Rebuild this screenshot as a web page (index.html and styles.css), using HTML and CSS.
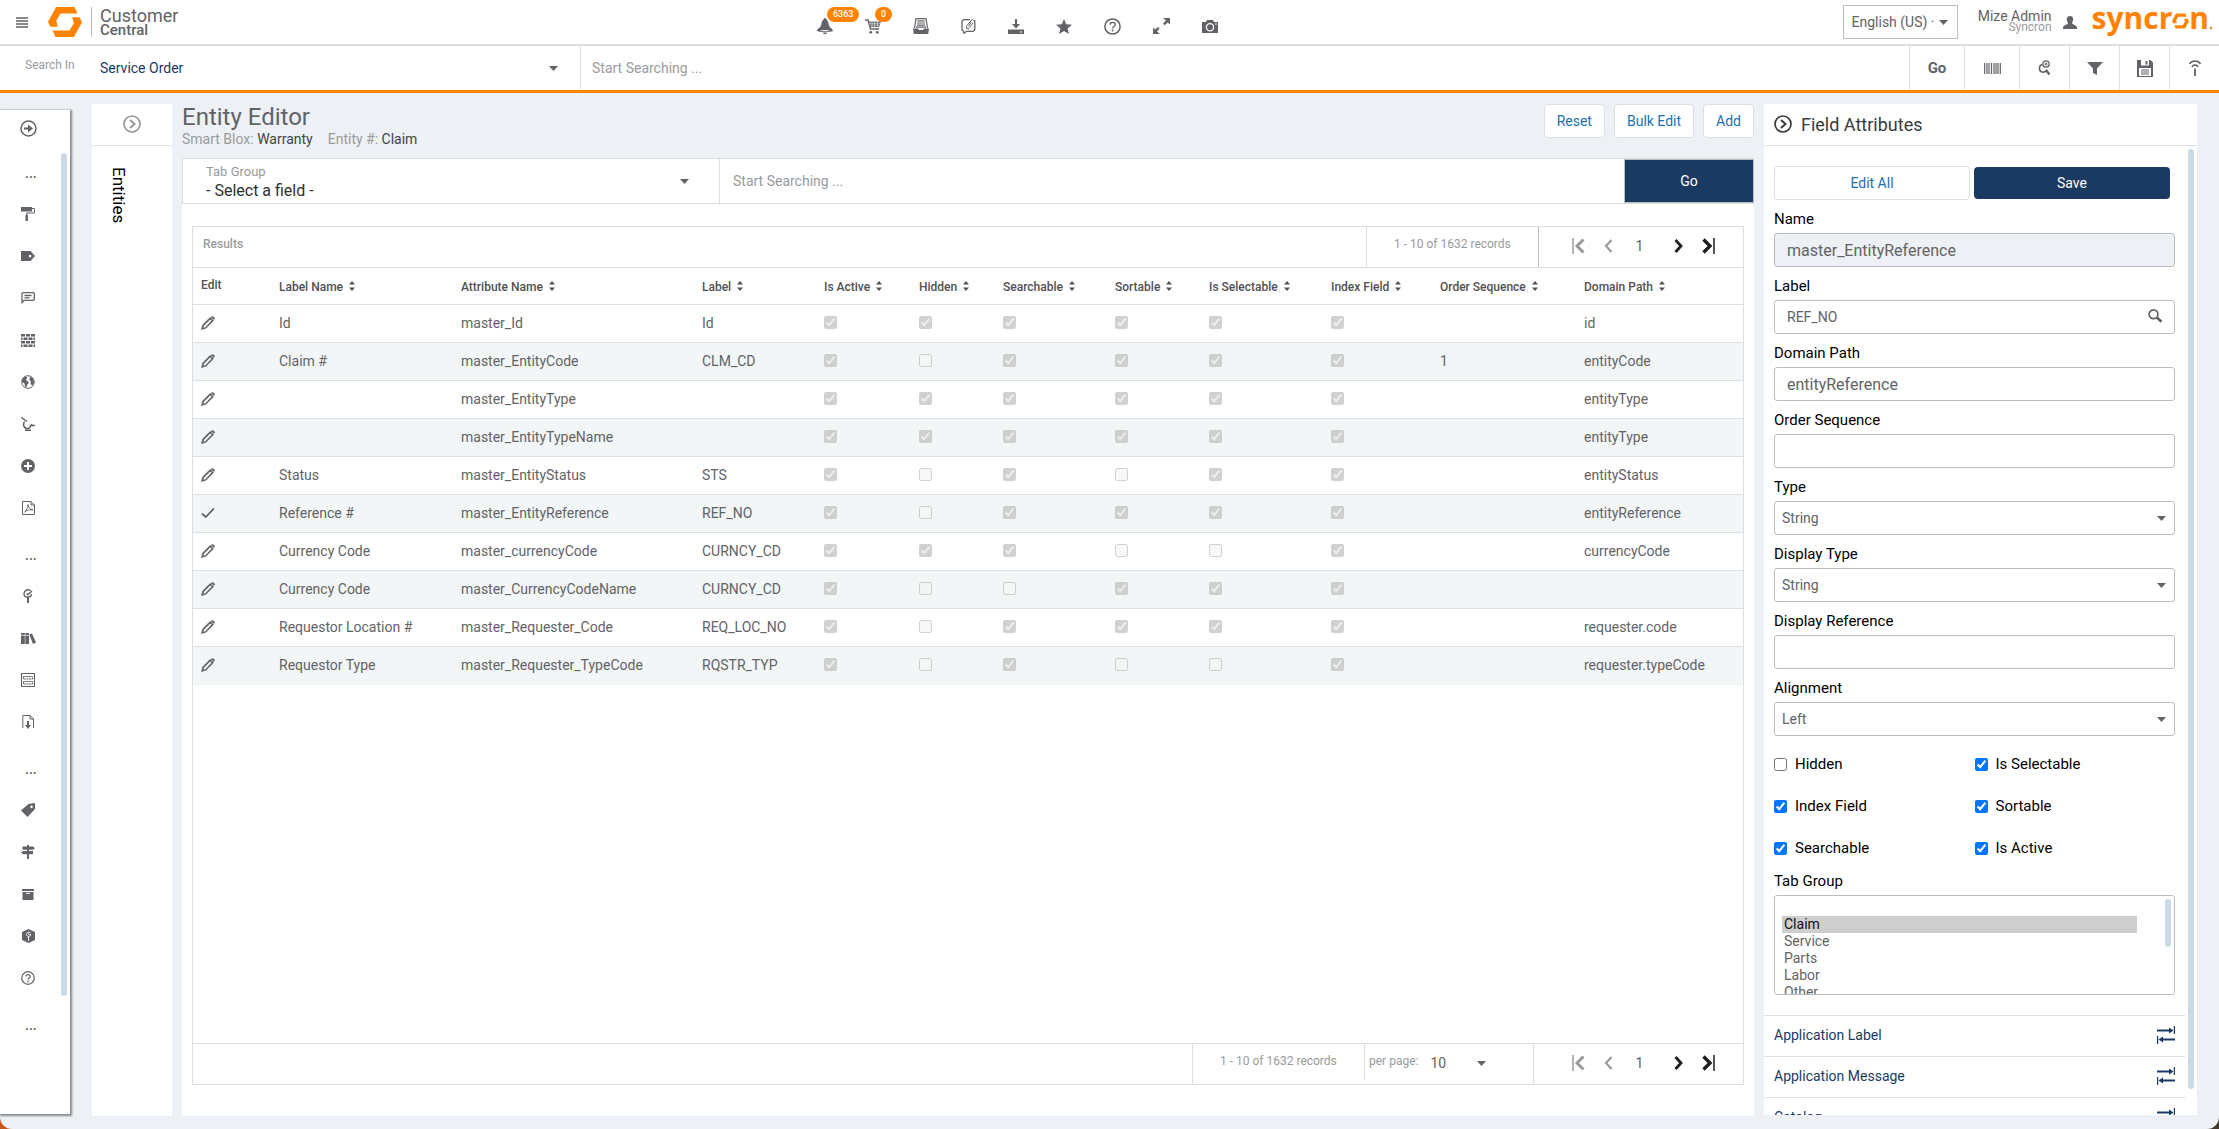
FILE: index.html
```html
<!DOCTYPE html>
<html lang="en">
<head>
<meta charset="utf-8">
<title>Customer Central - Entity Editor</title>
<link rel="stylesheet" href="styles.css">
</head>
<body>
<svg class="sprite" aria-hidden="true">
  <symbol id="i-pencil" viewBox="0 0 14 14"><path d="M0 14l1.300-5L9.200 1.100 12.800 4.700 5 12.600z M2.900 9.800l-.5 1.900 1.900-.4L10.500 4.800 9.200 3.500z" fill-rule="evenodd"/><path d="M9.800 .9c.9-1 2.200-1 3.100-.1 1 .9 1.100 2.100.2 3.200z"/></symbol>
  <symbol id="i-sort" viewBox="0 0 6 10"><path d="M0 3.600L3 0l3 3.600zM0 6.400L3 10l3-3.600z"/></symbol>
  <symbol id="i-first" viewBox="0 0 13 16"><path d="M1 0v16" fill="none" stroke="currentColor" stroke-width="1.500"/><path d="M11.500 1.500L5 8l6.500 6.500" fill="none" stroke="currentColor" stroke-width="3"/></symbol>
  <symbol id="i-prev" viewBox="0 0 9 14"><path d="M7.500 1L2 7l5.500 6" fill="none" stroke="currentColor" stroke-width="2.200"/></symbol>
  <symbol id="i-next" viewBox="0 0 9 14"><path d="M1.500 1L7 7l-5.500 6" fill="none" stroke="currentColor" stroke-width="2.800"/></symbol>
  <symbol id="i-last" viewBox="0 0 13 16"><path d="M12 0v16" fill="none" stroke="currentColor" stroke-width="1.500"/><path d="M1.500 1.500L8 8l-6.500 6.500" fill="none" stroke="currentColor" stroke-width="3.400"/></symbol>
  <symbol id="i-swap" viewBox="0 0 18 18"><path d="M17.400 0v8M.6 10v8" fill="none" stroke="currentColor" stroke-width="1.200"/><path d="M0 4.500h13M5 13.500h13" fill="none" stroke="currentColor" stroke-width="2"/><path d="M12 1.500l4.500 3-4.500 3zM6 10.500l-4.500 3 4.500 3z"/></symbol>
  <symbol id="i-chev" viewBox="0 0 18 18"><circle cx="9" cy="9" r="8" fill="none" stroke="currentColor" stroke-width="1.700"/><path d="M7 5l4.500 4L7 13" fill="none" stroke="currentColor" stroke-width="2"/></symbol>
  <symbol id="i-help" viewBox="0 0 17 17"><circle cx="8.500" cy="8.500" r="7.600" fill="none" stroke="currentColor" stroke-width="1.500"/><path d="M6 6.800c0-3.300 5.200-3.100 5.200-.2 0 1.700-2.500 1.700-2.500 3.800" fill="none" stroke="currentColor" stroke-width="1.400"/><circle cx="8.600" cy="12.600" r="1"/></symbol>
</svg>

<header class="topbar">
  <button class="plain menu-btn" aria-label="Menu"><svg width="12" height="11" viewBox="0 0 12 11"><path d="M0 1h12M0 4h12M0 7h12M0 10h12" stroke="currentColor" stroke-width="1.500"/></svg></button>
  <a class="brand" href="#">
    <svg width="34" height="30" viewBox="0 0 34 30" aria-hidden="true"><path fill="#ff8200" d="M8.200 0H26.600L29.400 6.500H12.500L8.200 13.700 9.800 19.700H2.500L0 14.700zM25.800 30H7.400L4.600 23.500H21.500L25.800 16.300 24.200 10.300H31.500L34 15.300z"/></svg>
    <span class="brand-text"><span class="brand-1">Customer</span><span class="brand-2">Central</span></span>
  </a>
  <nav class="quick" aria-label="Quick actions">
    <a href="#" aria-label="Notifications"><svg width="16" height="16" viewBox="0 0 16 16"><path d="M8 0c1 0 1.200 1 1.500 1.500C11.500 3 11.300 5 12 7.500c.7 2.500 3.700 3 4 5.500-3 1.400-13 1.400-16 0 .3-2.500 3.300-3 4-5.500C4.700 5 4.500 3 6.500 1.500 6.800 1 7 0 8 0z"/><path d="M6 14.500h4L9.500 16h-3z"/><ellipse cx="8" cy="12.600" rx="4.500" ry=".7" fill="#fff"/></svg><span class="badge">6363</span></a>
    <a href="#" aria-label="Cart"><svg width="16" height="15" viewBox="0 0 16 15"><path d="M0 1h3l2.500 9H14" fill="none" stroke="currentColor" stroke-width="1.400"/><path d="M4 2.500h12L14.200 8H5.400z"/><path d="M4 4.300h12M4.500 6.200h11M7 2v7M9.700 2v7M12.500 2v7" stroke="#fff" stroke-width=".5"/><circle cx="5.700" cy="13.300" r="1.400"/><circle cx="12.300" cy="13.300" r="1.400"/></svg><span class="badge">0</span></a>
    <a href="#" aria-label="Archive"><svg width="16" height="16" viewBox="0 0 16 16"><path d="M1.500 10L3 .6h10L14.500 10M4.500 2.800h7M4 5h8M4 7.200h8M3 9.200h10" fill="none" stroke="currentColor" stroke-width="1.200"/><path d="M0 10.500h5l1 1.500h4l1-1.500h5l-.8 5.500H.8z"/></svg></a>
    <a href="#" aria-label="Notes"><svg width="15" height="16" viewBox="0 0 15 16"><path d="M9 1.700H2.500L1 3v9l1.500 1.300.5 2 2.500-2H12L13.800 12V3L12.500 2" fill="none" stroke="currentColor" stroke-width="1.300"/><path d="M11.500 1L6 7.500c-1.500 2 .5 4 2.300 2.200L12 5M10.300 4L7.500 8.200M5 9.500l2.500 2" fill="none" stroke="currentColor"/></svg></a>
    <a href="#" aria-label="Download"><svg width="16" height="15" viewBox="0 0 16 15"><path d="M7 0h2v5h3L8 9.500 4 5h3z"/><path d="M0 10.500h16V15H0z"/><path d="M12 13h2" stroke="#fff"/></svg></a>
    <a href="#" aria-label="Favourites"><svg width="16" height="15" viewBox="0 0 16 15"><path d="M8 0l2.200 5.200 5.800.5-4.400 3.700L13 15l-5-3-5 3 1.400-5.600L0 5.700l5.800-.5z"/></svg></a>
    <a href="#" aria-label="Help"><svg width="17" height="17"><use href="#i-help"/></svg></a>
    <a href="#" aria-label="Full screen"><svg width="17" height="16" viewBox="0 0 17 16"><path d="M10 0h7v6.500l-2.200-2.100-3.200 2.800-1.600-1.600 3-3zM7 16H0V9.500l2.200 2.100L5 9l1.600 1.500L4 13.500z"/></svg></a>
    <a href="#" aria-label="Screenshot"><svg width="16" height="13" viewBox="0 0 16 13"><path d="M0 2h4l1-2h6l1 2h4v11H0z"/><circle cx="8" cy="7.300" r="3.600" fill="none" stroke="#fff" stroke-width="1.300"/><path d="M13 4h2" stroke="#fff"/></svg></a>
  </nav>
  <div class="account">
    <select class="lang" aria-label="Language"><option>English (US) ·</option></select>
    <div class="user"><span class="user-name">Mize Admin</span><span class="user-org">Syncron</span></div>
    <svg class="user-icon" width="14" height="13" viewBox="0 0 14 13" aria-hidden="true"><path d="M7 0c4 0 3.600 4.500 2 7 .3 2 5 1.500 5 5v1H0v-1c0-3.500 4.700-3 5-5C3.400 4.500 3 0 7 0z"/></svg>
    <a class="wordmark" href="#" aria-label="syncron"><span>syncr</span><svg width="17" height="16" viewBox="0 0 34 30" aria-hidden="true"><path fill="#ff8200" d="M8.200 0H26.600L29.400 6.500H12.500L8.200 13.700 9.800 19.700H2.500L0 14.700zM25.800 30H7.400L4.600 23.500H21.500L25.800 16.300 24.200 10.300H31.500L34 15.300z"/></svg><span>n</span><span class="dot">.</span></a>
  </div>
</header>

<form class="searchbar">
  <label class="search-in" for="scope">Search In</label>
  <select class="scope" id="scope"><option>Service Order</option></select>
  <input class="query" type="text" placeholder="Start Searching ..." aria-label="Start Searching">
  <button class="tool tool-wide tool-go" type="button">Go</button>
  <button class="tool tool-wide" type="button" aria-label="Barcode"><svg width="17" height="11" viewBox="0 0 17 11"><path d="M.7 0v11M3 0v11M5 0v11M7.500 0v11M10 0v11M12 0v11M14 0v11M16.300 0v11" stroke="currentColor" stroke-width="1.200"/></svg></button>
  <button class="tool" type="button" aria-label="Advanced search"><svg width="13" height="16" viewBox="0 0 13 16"><circle cx="8" cy="4" r="3.200" fill="none" stroke="currentColor" stroke-width="1.300"/><path d="M8 2.300v3.400M6.300 4h3.400" stroke="currentColor" stroke-width="1"/><path d="M4 4.500C.5 6 .5 11 4 12c2.500.5 4-.5 5-2" fill="none" stroke="currentColor" stroke-width="1.500"/><path d="M8 10l3.500 4.500" stroke="currentColor" stroke-width="2.200"/></svg></button>
  <button class="tool" type="button" aria-label="Filter"><svg width="16" height="13" viewBox="0 0 16 13"><path d="M0 0h16L10 6.500V13L6 11V6.500z"/></svg></button>
  <button class="tool" type="button" aria-label="Save"><svg width="16" height="17" viewBox="0 0 16 17"><path d="M0 0h13.500L16 2.500V17H0z"/><path d="M4 0h8v5.500H4z" fill="#fff"/><path d="M8.500 1h2v3.500h-2z"/><path d="M2 8h12v8H2z" fill="#fff"/><path d="M4 10h8M4 12h8M4 14h8" stroke="currentColor" stroke-width="1.100"/></svg></button>
  <button class="tool" type="button" aria-label="Signal"><svg width="12" height="16" viewBox="0 0 12 16"><path d="M.5 4C2.500 0 9.500 0 11.500 4M3 7C4 4.500 8 4.500 9 7" fill="none" stroke="currentColor" stroke-width="1.600"/><path d="M6 8.500V16" stroke="currentColor" stroke-width="1.800"/></svg></button>
</form>

<div class="work">
  <nav class="rail" aria-label="Modules">
    <a class="rail-top" href="#" aria-label="Expand"><svg width="17" height="17" viewBox="0 0 17 17"><circle cx="8.500" cy="8.500" r="7.500" fill="none" stroke="currentColor" stroke-width="1.500"/><path d="M4 7.500h4V4.500l5 4-5 4v-3H4z"/></svg></a>
    <div class="rail-sep">...</div>
    <a href="#" aria-label="Theme"><svg width="14" height="14" viewBox="0 0 14 14"><path d="M0 0h11v4.500H0z"/><path d="M11 1.500h2.400v4.500H5.700v2.500" fill="none" stroke="currentColor"/><path d="M4.500 8h2.400v6H4.500z"/></svg></a>
    <a href="#" aria-label="Labels"><svg width="14" height="10" viewBox="0 0 14 10"><path fill-rule="evenodd" d="M0 0h9.500L14 5l-4.500 5H0zM9 3.800a1.300 1.300 0 1 0 .1 0z"/></svg></a>
    <a href="#" aria-label="Messages"><svg width="14" height="12" viewBox="0 0 14 12"><path d="M1 11.500V1.500L2 .7h10.500l.8.800v6l-.8.800H3L.7 11M3.500 3.500h7M3.500 5.800h5" fill="none" stroke="currentColor" stroke-width="1.300"/></svg></a>
    <a href="#" aria-label="Blocks"><svg width="14" height="13" viewBox="0 0 14 13"><path d="M0 1.200h14M0 8.200h14" stroke="currentColor" stroke-width="2.400" stroke-dasharray="4 1"/><path d="M0 4.700h14M0 11.700h14" stroke="currentColor" stroke-width="2.400" stroke-dasharray="4 1" stroke-dashoffset="2.500"/></svg></a>
    <a href="#" aria-label="Global"><svg width="14" height="14" viewBox="0 0 14 14"><circle cx="7" cy="7" r="6.300" fill="none" stroke="currentColor" stroke-width="1"/><path d="M1 4.500L4 1.500l2.500 1L5 4.500l1 1.500 2 1.500L6 10l-.5 3L4 11 3.500 8.500 1 7zM9 1.500l3 2 1 4-1.500 3L9.500 9 10 6.500 8.500 5z"/></svg></a>
    <a href="#" aria-label="Tools"><svg width="14" height="14" viewBox="0 0 14 14"><path d="M.5.500L6 4.500M3.500 4.500C1.500 8 3 11 6 11.500c2.500.3 3.500-1.500 3.500-3H14M4 13.300h6M9.500 8.500l2-1" fill="none" stroke="currentColor" stroke-width="1.500"/></svg></a>
    <a href="#" aria-label="Add"><svg width="14" height="14" viewBox="0 0 14 14"><circle cx="7" cy="7" r="7"/><path d="M7 3v8M3 7h8" stroke="#fff" stroke-width="2"/></svg></a>
    <a href="#" aria-label="PDF"><svg width="13" height="14" viewBox="0 0 13 14"><path d="M.5.500h8.500l3.500 3.500v9.500H.5zM9 .5V4h3.500" fill="none" stroke="currentColor"/><path d="M2.500 11.500C4.500 9 6 6.500 6 3.500c.5 3 2 5 5 5.500-3-.5-5.500 0-8 1.500" fill="none" stroke="currentColor" stroke-width=".9"/></svg></a>
    <div class="rail-sep">...</div>
    <a href="#" aria-label="Diagnostics"><svg width="10" height="14" viewBox="0 0 10 14"><path d="M7.500 1.500C4-.5 1 2 1 5c0 4 7.500 4 7.500 0M3.500 4.500l1.500 1 4-3.500" fill="none" stroke="currentColor" stroke-width="1.400"/><path d="M5 8v6" stroke="currentColor" stroke-width="2"/></svg></a>
    <a href="#" aria-label="Library"><svg width="15" height="11" viewBox="0 0 15 11"><path d="M0 0h3.800v11H0zM4.300 0H8v11H4.300zM8.300 1.500L11 .5 15 9.500 12 11z"/><path d="M0 2.300h8" stroke="#fff" stroke-width=".7"/></svg></a>
    <a href="#" aria-label="Forms"><svg width="14" height="14" viewBox="0 0 14 14"><path d="M.5.500h13v13H.5z" fill="none" stroke="currentColor" stroke-width="1.200"/><path d="M2.500 3.500h9v2.500h-9zM2.500 8.500h9v2.500h-9z" fill="none" stroke="currentColor" stroke-width="1" stroke-dasharray="2 .6"/></svg></a>
    <a href="#" aria-label="Import"><svg width="12" height="14" viewBox="0 0 12 14"><path d="M.8 13V.5H8L11.500 4v9M8 .5V4h3.500" fill="none" stroke="currentColor"/><path d="M5 6h2v4h2l-3 4-3-4h2z"/></svg></a>
    <div class="rail-sep">...</div>
    <a href="#" aria-label="Pricing"><svg width="14" height="14" viewBox="0 0 14 14"><path fill-rule="evenodd" d="M7.500 1L14 0v6L6.500 14 0 7.500zM10.500 2.600a1.300 1.300 0 1 0 .1 0z"/></svg></a>
    <a href="#" aria-label="Routes"><svg width="14" height="14" viewBox="0 0 14 14"><path d="M6 0h2v14H6z"/><path d="M1.500 1.500H12l2 1.700-2 1.600H1.500zM12 6H2L0 7.600l2 1.700h10z"/></svg></a>
    <a href="#" aria-label="Storage"><svg width="12" height="11" viewBox="0 0 12 11"><path d="M0 0h12v2H0zM.5 3h11v8H.5z"/><path d="M4 4.300h4" stroke="#fff"/></svg></a>
    <a href="#" aria-label="Services"><svg width="13" height="14" viewBox="0 0 13 14"><path d="M6.500 0L13 3v8l-6.500 3L0 11V3z"/><path d="M8.500 3.800C6 2.300 4.300 4 4.500 5.500c.3 2.500 4 2.500 4.300 0L6 5M6.500 7.500V12" fill="none" stroke="#fff" stroke-width="1"/></svg></a>
    <a href="#" aria-label="Help"><svg width="14" height="14"><use href="#i-help"/></svg></a>
    <div class="rail-sep">...</div>
    <div class="rail-thumb"></div>
  </nav>

  <aside class="entities">
    <div class="entities-head"><button class="plain" aria-label="Expand entities"><svg width="18" height="18"><use href="#i-chev"/></svg></button></div>
    <h2>Entities</h2>
  </aside>

  <main class="editor">
    <div class="editor-head">
      <div>
        <h1>Entity Editor</h1>
        <p class="meta"><span>Smart Blox: <b>Warranty</b></span><span>Entity #: <b>Claim</b></span></p>
      </div>
      <div class="actions">
        <button class="btn">Reset</button>
        <button class="btn">Bulk Edit</button>
        <button class="btn">Add</button>
      </div>
    </div>

    <form class="filter">
      <div class="filter-group">
        <label for="tabgroup">Tab Group</label>
        <select id="tabgroup"><option>- Select a field -</option></select>
      </div>
      <input type="text" placeholder="Start Searching ..." aria-label="Search fields">
      <button class="filter-go" type="button">Go</button>
    </form>

    <div class="content">
      <section class="results">
        <div class="bar">
          <h3>Results</h3>
          <span class="records records-top">1 - 10 of 1632 records</span>
          <div class="pager">
            <button class="plain off" aria-label="First page"><svg width="13" height="16"><use href="#i-first"/></svg></button>
            <button class="plain off" aria-label="Previous page"><svg width="9" height="14"><use href="#i-prev"/></svg></button>
            <span class="page">1</span>
            <button class="plain" aria-label="Next page"><svg width="9" height="14"><use href="#i-next"/></svg></button>
            <button class="plain" aria-label="Last page"><svg width="13" height="16"><use href="#i-last"/></svg></button>
          </div>
        </div>
        <table>
          <colgroup><col class="c-edit"><col class="c-name"><col class="c-attr"><col class="c-label"><col class="c-active"><col class="c-hidden"><col class="c-search"><col class="c-sort"><col class="c-select"><col class="c-index"><col class="c-order"><col></colgroup>
          <thead>
            <tr><th class="th-edit">Edit</th><th>Label Name<svg><use href="#i-sort"/></svg></th><th>Attribute Name<svg><use href="#i-sort"/></svg></th><th>Label<svg><use href="#i-sort"/></svg></th><th>Is Active<svg><use href="#i-sort"/></svg></th><th>Hidden<svg><use href="#i-sort"/></svg></th><th>Searchable<svg><use href="#i-sort"/></svg></th><th>Sortable<svg><use href="#i-sort"/></svg></th><th>Is Selectable<svg><use href="#i-sort"/></svg></th><th>Index Field<svg><use href="#i-sort"/></svg></th><th>Order Sequence<svg><use href="#i-sort"/></svg></th><th>Domain Path<svg><use href="#i-sort"/></svg></th></tr>
          </thead>
          <tbody>
            <tr><td><button class="plain" aria-label="Edit"><svg width="14" height="14"><use href="#i-pencil"/></svg></button></td><td>Id</td><td>master_Id</td><td>Id</td><td><input type="checkbox" aria-label="Is Active" disabled checked></td><td><input type="checkbox" aria-label="Hidden" disabled checked></td><td><input type="checkbox" aria-label="Searchable" disabled checked></td><td><input type="checkbox" aria-label="Sortable" disabled checked></td><td><input type="checkbox" aria-label="Is Selectable" disabled checked></td><td><input type="checkbox" aria-label="Index Field" disabled checked></td><td></td><td>id</td></tr>
            <tr><td><button class="plain" aria-label="Edit"><svg width="14" height="14"><use href="#i-pencil"/></svg></button></td><td>Claim #</td><td>master_EntityCode</td><td>CLM_CD</td><td><input type="checkbox" aria-label="Is Active" disabled checked></td><td><input type="checkbox" aria-label="Hidden" disabled></td><td><input type="checkbox" aria-label="Searchable" disabled checked></td><td><input type="checkbox" aria-label="Sortable" disabled checked></td><td><input type="checkbox" aria-label="Is Selectable" disabled checked></td><td><input type="checkbox" aria-label="Index Field" disabled checked></td><td>1</td><td>entityCode</td></tr>
            <tr><td><button class="plain" aria-label="Edit"><svg width="14" height="14"><use href="#i-pencil"/></svg></button></td><td></td><td>master_EntityType</td><td></td><td><input type="checkbox" aria-label="Is Active" disabled checked></td><td><input type="checkbox" aria-label="Hidden" disabled checked></td><td><input type="checkbox" aria-label="Searchable" disabled checked></td><td><input type="checkbox" aria-label="Sortable" disabled checked></td><td><input type="checkbox" aria-label="Is Selectable" disabled checked></td><td><input type="checkbox" aria-label="Index Field" disabled checked></td><td></td><td>entityType</td></tr>
            <tr><td><button class="plain" aria-label="Edit"><svg width="14" height="14"><use href="#i-pencil"/></svg></button></td><td></td><td>master_EntityTypeName</td><td></td><td><input type="checkbox" aria-label="Is Active" disabled checked></td><td><input type="checkbox" aria-label="Hidden" disabled checked></td><td><input type="checkbox" aria-label="Searchable" disabled checked></td><td><input type="checkbox" aria-label="Sortable" disabled checked></td><td><input type="checkbox" aria-label="Is Selectable" disabled checked></td><td><input type="checkbox" aria-label="Index Field" disabled checked></td><td></td><td>entityType</td></tr>
            <tr><td><button class="plain" aria-label="Edit"><svg width="14" height="14"><use href="#i-pencil"/></svg></button></td><td>Status</td><td>master_EntityStatus</td><td>STS</td><td><input type="checkbox" aria-label="Is Active" disabled checked></td><td><input type="checkbox" aria-label="Hidden" disabled></td><td><input type="checkbox" aria-label="Searchable" disabled checked></td><td><input type="checkbox" aria-label="Sortable" disabled></td><td><input type="checkbox" aria-label="Is Selectable" disabled checked></td><td><input type="checkbox" aria-label="Index Field" disabled checked></td><td></td><td>entityStatus</td></tr>
            <tr><td><button class="plain" aria-label="Selected"><svg width="14" height="14" viewBox="0 0 14 14"><path d="M1 7.500L4.800 11 13 2.500" fill="none" stroke="currentColor" stroke-width="1.800"/></svg></button></td><td>Reference #</td><td>master_EntityReference</td><td>REF_NO</td><td><input type="checkbox" aria-label="Is Active" disabled checked></td><td><input type="checkbox" aria-label="Hidden" disabled></td><td><input type="checkbox" aria-label="Searchable" disabled checked></td><td><input type="checkbox" aria-label="Sortable" disabled checked></td><td><input type="checkbox" aria-label="Is Selectable" disabled checked></td><td><input type="checkbox" aria-label="Index Field" disabled checked></td><td></td><td>entityReference</td></tr>
            <tr><td><button class="plain" aria-label="Edit"><svg width="14" height="14"><use href="#i-pencil"/></svg></button></td><td>Currency Code</td><td>master_currencyCode</td><td>CURNCY_CD</td><td><input type="checkbox" aria-label="Is Active" disabled checked></td><td><input type="checkbox" aria-label="Hidden" disabled checked></td><td><input type="checkbox" aria-label="Searchable" disabled checked></td><td><input type="checkbox" aria-label="Sortable" disabled></td><td><input type="checkbox" aria-label="Is Selectable" disabled></td><td><input type="checkbox" aria-label="Index Field" disabled checked></td><td></td><td>currencyCode</td></tr>
            <tr><td><button class="plain" aria-label="Edit"><svg width="14" height="14"><use href="#i-pencil"/></svg></button></td><td>Currency Code</td><td>master_CurrencyCodeName</td><td>CURNCY_CD</td><td><input type="checkbox" aria-label="Is Active" disabled checked></td><td><input type="checkbox" aria-label="Hidden" disabled></td><td><input type="checkbox" aria-label="Searchable" disabled></td><td><input type="checkbox" aria-label="Sortable" disabled checked></td><td><input type="checkbox" aria-label="Is Selectable" disabled checked></td><td><input type="checkbox" aria-label="Index Field" disabled checked></td><td></td><td></td></tr>
            <tr><td><button class="plain" aria-label="Edit"><svg width="14" height="14"><use href="#i-pencil"/></svg></button></td><td>Requestor Location #</td><td>master_Requester_Code</td><td>REQ_LOC_NO</td><td><input type="checkbox" aria-label="Is Active" disabled checked></td><td><input type="checkbox" aria-label="Hidden" disabled></td><td><input type="checkbox" aria-label="Searchable" disabled checked></td><td><input type="checkbox" aria-label="Sortable" disabled checked></td><td><input type="checkbox" aria-label="Is Selectable" disabled checked></td><td><input type="checkbox" aria-label="Index Field" disabled checked></td><td></td><td>requester.code</td></tr>
            <tr><td><button class="plain" aria-label="Edit"><svg width="14" height="14"><use href="#i-pencil"/></svg></button></td><td>Requestor Type</td><td>master_Requester_TypeCode</td><td>RQSTR_TYP</td><td><input type="checkbox" aria-label="Is Active" disabled checked></td><td><input type="checkbox" aria-label="Hidden" disabled></td><td><input type="checkbox" aria-label="Searchable" disabled checked></td><td><input type="checkbox" aria-label="Sortable" disabled></td><td><input type="checkbox" aria-label="Is Selectable" disabled></td><td><input type="checkbox" aria-label="Index Field" disabled checked></td><td></td><td>requester.typeCode</td></tr>
          </tbody>
        </table>
        <div class="bar bar-foot">
          <span class="records">1 - 10 of 1632 records</span>
          <div class="perpage"><label for="perpage">per page:</label><select id="perpage"><option>10</option></select></div>
          <div class="pager">
            <button class="plain off" aria-label="First page"><svg width="13" height="16"><use href="#i-first"/></svg></button>
            <button class="plain off" aria-label="Previous page"><svg width="9" height="14"><use href="#i-prev"/></svg></button>
            <span class="page">1</span>
            <button class="plain" aria-label="Next page"><svg width="9" height="14"><use href="#i-next"/></svg></button>
            <button class="plain" aria-label="Last page"><svg width="13" height="16"><use href="#i-last"/></svg></button>
          </div>
        </div>
      </section>
    </div>
  </main>

  <aside class="attrs">
    <div class="attrs-head"><button class="plain" aria-label="Collapse"><svg width="18" height="18"><use href="#i-chev"/></svg></button><h2>Field Attributes</h2></div>
    <form class="attrs-body">
      <div class="attrs-actions"><button class="btn" type="button">Edit All</button><button class="btn-primary" type="button">Save</button></div>
      <div class="field"><label for="f-name">Name</label><input id="f-name" type="text" value="master_EntityReference" readonly></div>
      <div class="field"><label for="f-label">Label</label><div class="with-icon"><input class="small" id="f-label" type="text" value="REF_NO"><svg width="15" height="14" viewBox="0 0 15 14" aria-hidden="true"><circle cx="5.500" cy="5.300" r="4.400" fill="none" stroke="currentColor" stroke-width="1.700"/><path d="M8.800 8.500l4.700 4.300" stroke="currentColor" stroke-width="2.600"/></svg></div></div>
      <div class="field"><label for="f-path">Domain Path</label><input id="f-path" type="text" value="entityReference"></div>
      <div class="field"><label for="f-order">Order Sequence</label><input id="f-order" type="text"></div>
      <div class="field"><label for="f-type">Type</label><select id="f-type"><option>String</option></select></div>
      <div class="field"><label for="f-dtype">Display Type</label><select id="f-dtype"><option>String</option></select></div>
      <div class="field"><label for="f-dref">Display Reference</label><input id="f-dref" type="text"></div>
      <div class="field"><label for="f-align">Alignment</label><select id="f-align"><option>Left</option></select></div>
      <div class="checks">
        <label><input type="checkbox">Hidden</label><label><input type="checkbox" checked>Is Selectable</label>
        <label><input type="checkbox" checked>Index Field</label><label><input type="checkbox" checked>Sortable</label>
        <label><input type="checkbox" checked>Searchable</label><label><input type="checkbox" checked>Is Active</label>
      </div>
      <div class="field"><label for="f-tabs">Tab Group</label><div class="listbox"><select id="f-tabs" multiple><option></option><option selected>Claim</option><option>Service</option><option>Parts</option><option>Labor</option><option>Other</option></select><div class="list-thumb"></div></div></div>
    </form>
    <div class="links">
      <a href="#">Application Label<svg width="18" height="18"><use href="#i-swap"/></svg></a>
      <a href="#">Application Message<svg width="18" height="18"><use href="#i-swap"/></svg></a>
      <a href="#">Catalog<svg width="18" height="18"><use href="#i-swap"/></svg></a>
    </div>
    <div class="attrs-thumb"></div>
  </aside>
</div>
</body>
</html>
```
FILE: styles.css
```css
* { box-sizing: border-box; }

:root {
  --grey: #626366;
  --light: #989b9e;
  --line: #dbdfe3;
  --field: #b9bec1;
  --navy: #1b3a61;
  --blue: #1b70ae;
  --orange: #ff8200;
  --thumb: #cbdae4;
}

html {
  height: 100%;
  background: linear-gradient(to right, #c5561b 50%, #45382c 50%);
}

body {
  margin: 0;
  height: 100vh;
  display: flex;
  flex-direction: column;
  overflow: hidden;
  background: #edf1f5;
  border-radius: 0 0 12px 12px;
  font-family: Roboto, "Liberation Sans", sans-serif;
  font-size: 14px;
  line-height: 20px;
  color: var(--grey);
}

h1, h2, h3, p { margin: 0; font-weight: 400; }
a { color: inherit; text-decoration: none; }
svg { fill: currentColor; flex: none; display: block; }
.sprite { position: absolute; width: 0; height: 0; }

input, select, button { font: inherit; color: inherit; margin: 0; }
input[type="checkbox"] { width: 13px; height: 13px; display: block; }
input::placeholder { color: var(--light); opacity: 1; }
button { cursor: pointer; }

select:not([multiple]) {
  appearance: none;
  border: 0;
  border-radius: 0;
  background: no-repeat url("data:image/svg+xml,%3Csvg xmlns='http://www.w3.org/2000/svg' width='9' height='5'%3E%3Cpath d='M0 0h9L4.500 5z' fill='%23626366'/%3E%3C/svg%3E");
}

.plain { border: 0; padding: 0; background: none; display: block; }

/* top bar */
.topbar {
  flex: none;
  height: 46px;
  display: flex;
  background: #fff;
  border-bottom: 2px solid var(--line);
}
.menu-btn { padding: 0 20px 0 16px; align-self: center; }
.brand { display: flex; align-items: center; gap: 9px; }
.brand-text {
  display: flex;
  flex-direction: column;
  border-left: 1px solid var(--field);
  padding-left: 8px;
  height: 30px;
}
.brand-1 { font-size: 18px; line-height: 17px; }
.brand-2 { font-size: 15px; line-height: 13px; font-weight: 500; }

.quick {
  flex: 1;
  display: flex;
  justify-content: center;
  align-items: center;
  gap: 32px;
  padding: 8px 0 0 14px;
}
.quick a { position: relative; }
.badge {
  position: absolute;
  left: 10px;
  bottom: 12px;
  height: 15px;
  padding: 0 6px;
  border-radius: 8px;
  background: var(--orange);
  color: #fff;
  font-size: 9px;
  font-weight: 500;
  line-height: 15px;
}

.account { display: flex; align-items: flex-start; padding-right: 6px; }
select.lang {
  width: 115px;
  height: 34px;
  margin-top: 5px;
  padding: 0 8px;
  border: 1px solid var(--field);
  background-position: right 9px center;
}
.user { width: 94px; padding-top: 9px; display: flex; flex-direction: column; align-items: flex-end; }
.user-name { line-height: 14px; }
.user-org { font-size: 12px; line-height: 8px; color: var(--light); }
.user-icon { margin: 16px 15px 0 11px; }
.wordmark {
  display: flex;
  align-items: baseline;
  color: var(--orange);
  font: 700 30px/36px "Open Sans", sans-serif;
}
.wordmark .dot { font-size: 14px; }

/* global search */
.searchbar {
  flex: none;
  height: 47px;
  display: flex;
  align-items: stretch;
  background: #fff;
  border-bottom: 3px solid var(--orange);
}
.search-in { width: 100px; padding: 9px 0 0 25px; font-size: 12px; color: var(--light); }
select.scope { width: 480px; color: var(--navy); background-position: right 22px center; }
.query { flex: 1; min-width: 0; border: 0; border-left: 1px solid var(--line); padding: 0 11px; }
.tool {
  width: 50px;
  border: 0;
  border-left: 1px solid var(--line);
  padding: 0;
  background: #fff;
  display: flex;
  align-items: center;
  justify-content: center;
}
.tool-wide { width: 55px; }
.tool-go { font-size: 15px; font-weight: 700; }

/* work area */
.work { flex: 1; min-height: 0; display: flex; padding: 11px 22px 13px 0; }

.rail {
  flex: none;
  width: 70px;
  margin: 6px 22px 2px 0;
  background: #fff;
  box-shadow: 1px 1px 2px 1px #85888b;
  position: relative;
}
.rail a { height: 42px; padding-right: 14px; display: flex; align-items: center; justify-content: center; }
.rail .rail-top { height: 37px; }
.rail-sep { height: 46px; padding: 16px 0 0 25px; line-height: 20px; font-weight: 500; }
.rail-thumb { position: absolute; left: 61px; top: 43px; bottom: 118px; width: 6px; border-radius: 3px; background: var(--thumb); }

.entities { flex: none; width: 80px; margin-right: 10px; background: #fff; color: #000; }
.entities-head {
  height: 42px;
  padding-bottom: 2px;
  border-bottom: 1px solid var(--line);
  display: flex;
  align-items: center;
  justify-content: center;
  color: var(--light);
}
.entities h2 { writing-mode: vertical-rl; font-size: 17px; line-height: 20px; margin: 21px 0 0 17px; }

.editor { flex: 1; min-width: 0; display: flex; flex-direction: column; }
.editor-head { height: 54px; display: flex; justify-content: space-between; align-items: flex-start; }
.editor-head h1 { font-size: 24px; line-height: 26px; }
.meta { display: flex; gap: 15px; line-height: 18px; color: var(--light); }
.meta b { font-weight: 400; color: #434446; }
.actions { display: flex; gap: 9px; }
.btn {
  height: 34px;
  padding: 0 12px;
  border: 1px solid var(--line);
  border-radius: 4px;
  background: #fff;
  color: var(--blue);
}

.filter { height: 46px; display: flex; align-items: flex-start; background: #fff; border: 1px solid var(--line); border-right: 0; }
.filter-group { width: 536px; display: grid; }
.filter-group label { grid-area: 1 / 1; z-index: 1; justify-self: start; padding: 3px 0 0 23px; font-size: 13px; line-height: 20px; color: var(--light); }
.filter-group select { grid-area: 1 / 1; height: 44px; padding: 20px 0 0 23px; font-size: 16px; color: #2f3031; background-position: right 30px center; }
.filter input { flex: 1; min-width: 0; height: 44px; border: 0; border-left: 1px solid var(--line); padding: 0 13px; }
.filter-go { width: 130px; height: 44px; border: 1px solid var(--field); background: var(--navy); color: #fff; }

.content { flex: 1; min-height: 0; display: flex; background: #fff; padding: 22px 10px 31px; }
.results { flex: 1; min-width: 0; display: flex; flex-direction: column; border: 1px solid var(--line); }
.bar { height: 40px; flex: none; display: flex; align-items: stretch; justify-content: flex-end; }
.bar h3 { flex: 1; padding: 7px 10px; font-size: 12px; font-weight: 500; color: var(--light); }
.records { width: 172px; padding: 7px 0 0 27px; font-size: 12px; color: var(--light); border-left: 1px solid var(--line); }
.bar-foot { margin-top: auto; height: 41px; border-top: 1px solid var(--line); }
.perpage { width: 169px; margin-bottom: 4px; padding: 7px 0 0 4px; display: flex; border-left: 1px solid var(--line); }
.perpage label { font-size: 12px; color: var(--light); }
.perpage select { width: 58px; height: 24px; margin-left: 12px; background-position: right 2px center; }
.pager { width: 210px; padding: 0 28px 2px 38px; display: flex; align-items: center; justify-content: space-between; border-left: 1px solid var(--line); color: #1d1e1f; }
.bar:not(.bar-foot) .pager { width: 205px; padding-left: 33px; border-color: var(--field); }
.pager .off { color: var(--light); }
.page { color: var(--grey); padding: 0 12px 0 4px; }

table { width: 100%; table-layout: fixed; border-collapse: collapse; border-top: 1px solid var(--line); }
.c-edit { width: 78px; }
.c-name { width: 182px; }
.c-attr { width: 241px; }
.c-label { width: 122px; }
.c-active { width: 95px; }
.c-hidden { width: 84px; }
.c-search { width: 112px; }
.c-sort { width: 94px; }
.c-select { width: 122px; }
.c-index { width: 109px; }
.c-order { width: 144px; }
th, td { padding: 0 8px; text-align: left; white-space: nowrap; }
th { height: 37px; padding-top: 2px; font-size: 12px; font-weight: 500; color: #505154; }
.th-edit { padding: 0 8px 2px; }
th svg { display: inline-block; width: 6px; height: 10px; margin-left: 6px; }
td { height: 38px; padding-bottom: 2px; border-top: 1px solid var(--line); }
tbody tr:nth-child(even) { background: #f2f6f7; }

/* field attributes */
.attrs {
  flex: none;
  width: 433px;
  margin: 0 0 1px 10px;
  background: #fff;
  overflow: hidden;
  position: relative;
}
.attrs-head { height: 42px; padding: 0 0 2px 10px; display: flex; align-items: center; gap: 9px; border-bottom: 1px solid var(--line); color: #3a3b3c; }
.attrs-head h2 { font-size: 18px; padding-top: 2px; }
.attrs-body { padding: 20px 22px 13px 10px; color: #000; }
.attrs-actions { display: grid; grid-template-columns: 1fr 1fr; gap: 4px; align-items: center; margin: 0 5px 7px 0; }
.btn-primary { height: 32px; border: 0; border-radius: 4px; background: var(--navy); color: #fff; }
.field { padding-bottom: 7px; display: flex; flex-direction: column; }
.field label { padding-bottom: 2px; font-size: 15px; line-height: 24px; }
.field input, .field select:not([multiple]) {
  width: 100%;
  height: 34px;
  border: 1px solid var(--field);
  border-radius: 3px;
  color: var(--grey);
}
.field input { padding: 0 12px; font-size: 16px; }
.field input.small { font-size: 14px; }
.field input[readonly] { background: #edf1f5; }
.field select:not([multiple]) { padding: 0 7px; background-position: right 8px center; }
.with-icon { position: relative; }
.with-icon svg { position: absolute; right: 12px; top: 9px; color: var(--grey); }
.checks { display: grid; grid-template-columns: 1fr 1fr; }
.checks label { height: 42px; display: flex; align-items: center; gap: 8px; font-size: 15px; }
.listbox { position: relative; height: 100px; border: 1px solid var(--field); border-radius: 3px; overflow: hidden; }
.listbox select { width: 100%; height: 98px; border: 0; padding: 3px 37px 0 7px; background: #fff; color: var(--grey); scrollbar-width: none; outline: 0; }
.listbox option { height: 17px; min-height: 17px; padding: 0 2px; line-height: 17px; }
.list-thumb { position: absolute; right: 3px; top: 3px; width: 6px; height: 48px; border-radius: 3px; background: var(--thumb); }
.links { width: 421px; }
.links a { height: 41px; padding: 0 10px 2px; display: flex; align-items: center; justify-content: space-between; border-top: 1px solid var(--line); color: var(--navy); }
.attrs-thumb { position: absolute; right: 3px; top: 45px; bottom: 26px; width: 6px; border-radius: 3px; background: var(--thumb); }
```
